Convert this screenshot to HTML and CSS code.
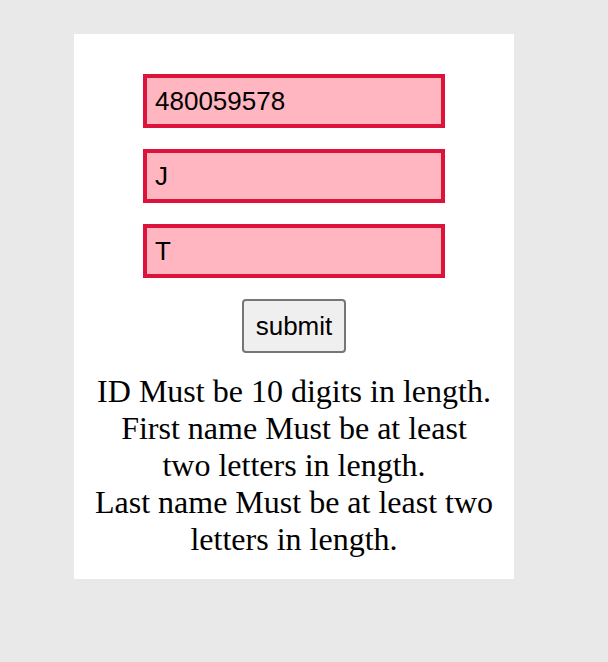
FILE: index.html
```html
<!DOCTYPE html>
<html>
<head>
<meta charset="utf-8">
<link rel="stylesheet" href="styles.css">
</head>
<body>
<div class="card">
  <form class="form">
    <input class="field" type="text" value="480059578">
    <input class="field" type="text" value="J">
    <input class="field" type="text" value="T">
    <button class="submit" type="button">submit</button>
  </form>
  <div class="errors">
    <div>ID Must be 10 digits in length.</div>
    <div>First name Must be at least two letters in length.</div>
    <div>Last name Must be at least two letters in length.</div>
  </div>
</div>
</body>
</html>
```

FILE: styles.css
```css
html {
  background: #e9e9e9;
}
body {
  margin: 0;
  padding: 34px 0 0 74px;
  font-family: "Liberation Serif", "Times New Roman", serif;
}
.card {
  width: 440px;
  box-sizing: border-box;
  background: #ffffff;
  padding: 40px 20px 21px;
}
.form {
  display: flex;
  flex-direction: column;
  align-items: center;
  gap: 21px;
}
.field {
  box-sizing: border-box;
  width: 302px;
  height: 54px;
  margin: 0;
  padding: 0 8px;
  border: 4px solid #dc143c;
  background: #ffb6c1;
  color: #000;
  font-family: "Liberation Sans", Arial, sans-serif;
  font-size: 26px;
  outline: none;
}
.submit {
  box-sizing: border-box;
  height: 54px;
  margin: 0;
  padding: 0 12px;
  border: 2px solid #767676;
  border-radius: 4px;
  background: #efefef;
  color: #000;
  font-family: "Liberation Sans", Arial, sans-serif;
  font-size: 26px;
}
.errors {
  margin-top: 20px;
  text-align: center;
  font-size: 32px;
  color: #000;
}
```
